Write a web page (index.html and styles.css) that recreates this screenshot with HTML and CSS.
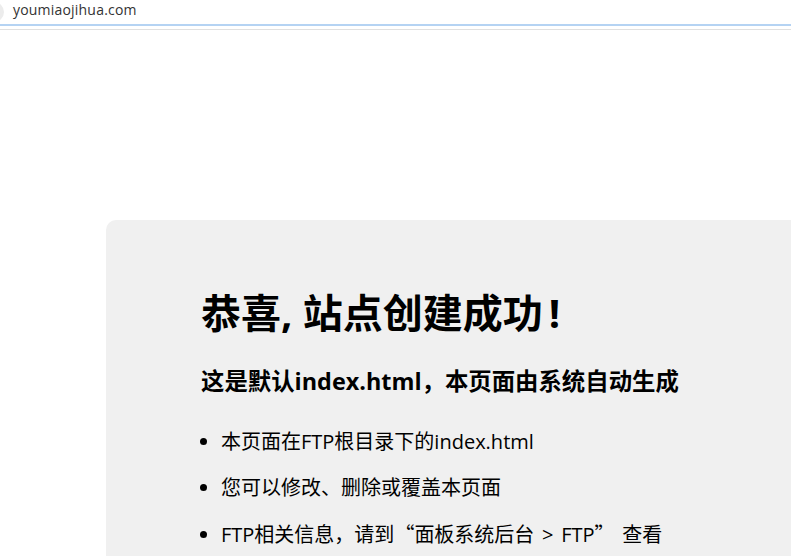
FILE: index.html
```html
<!DOCTYPE html>
<html lang="zh-CN">

<head>
  <meta charset="UTF-8" />
  <title>恭喜，站点创建成功！</title>
  <link rel="stylesheet" href="styles.css">
</head>

<body>
  <div class="address-bar">
    <span class="site-icon"></span>
    <span class="url">youmiaojihua.com</span>
  </div>
  <main class="page">
    <div class="container">
      <h1>恭喜, 站点创建成功<span class="bang">!</span></h1>
      <h3>这是默认index.html，本页面由系统自动生成</h3>
      <ul>
        <li>本页面在FTP根目录下的index.html</li>
        <li>您可以修改、删除或覆盖本页面</li>
        <li class="spaced">FTP相关信息，请到<span class="cn">“</span>面板系统后台 &gt; FTP<span class="cn">”</span> 查看</li>
      </ul>
    </div>
  </main>
</body>

</html>
```

FILE: styles.css
```css
* {
  margin: 0;
  padding: 0;
  box-sizing: border-box;
}

html,
body {
  height: 100%;
  overflow: hidden;
}

body {
  background-color: #fff;
  color: #000;
  font-family: "Open Sans", "Noto Sans CJK SC", sans-serif;
}

.address-bar {
  height: 30px;
  display: flex;
  align-items: flex-start;
  gap: 9px;
  border-bottom: 1px solid #e0e0e0;
  position: relative;
}

/* blue focus line under the url */
.address-bar::after {
  content: "";
  position: absolute;
  left: 0;
  right: 0;
  top: 24px;
  height: 2px;
  background: #b5d3f3;
}

.site-icon {
  flex: none;
  width: 20px;
  height: 20px;
  margin: 2px 0 0 -16px;
  border-radius: 50%;
  background: #ececec;
}

.url {
  font-size: 14px;
  line-height: 20px;
  letter-spacing: 0.2px;
  color: #333;
}

.page {
  padding: 190px 0 0 106px;
}

.container {
  width: 900px;
  padding: 64px 95px;
  background: #f0f0f0;
  border-radius: 10px;
}

h1 {
  font-size: 40px;
  line-height: 58px;
  margin-bottom: 22px;
}

.bang {
  margin-left: 6px;
}

h3 {
  font-size: 23.4px;
  line-height: 34px;
  margin-bottom: 29px;
}

ul {
  padding-left: 20px;
}

li {
  font-size: 20px;
  line-height: 30px;
  margin-bottom: 16px;
}

.spaced {
  word-spacing: 2.5px;
}

.cn {
  font-family: "Noto Sans CJK SC", sans-serif;
}
```
